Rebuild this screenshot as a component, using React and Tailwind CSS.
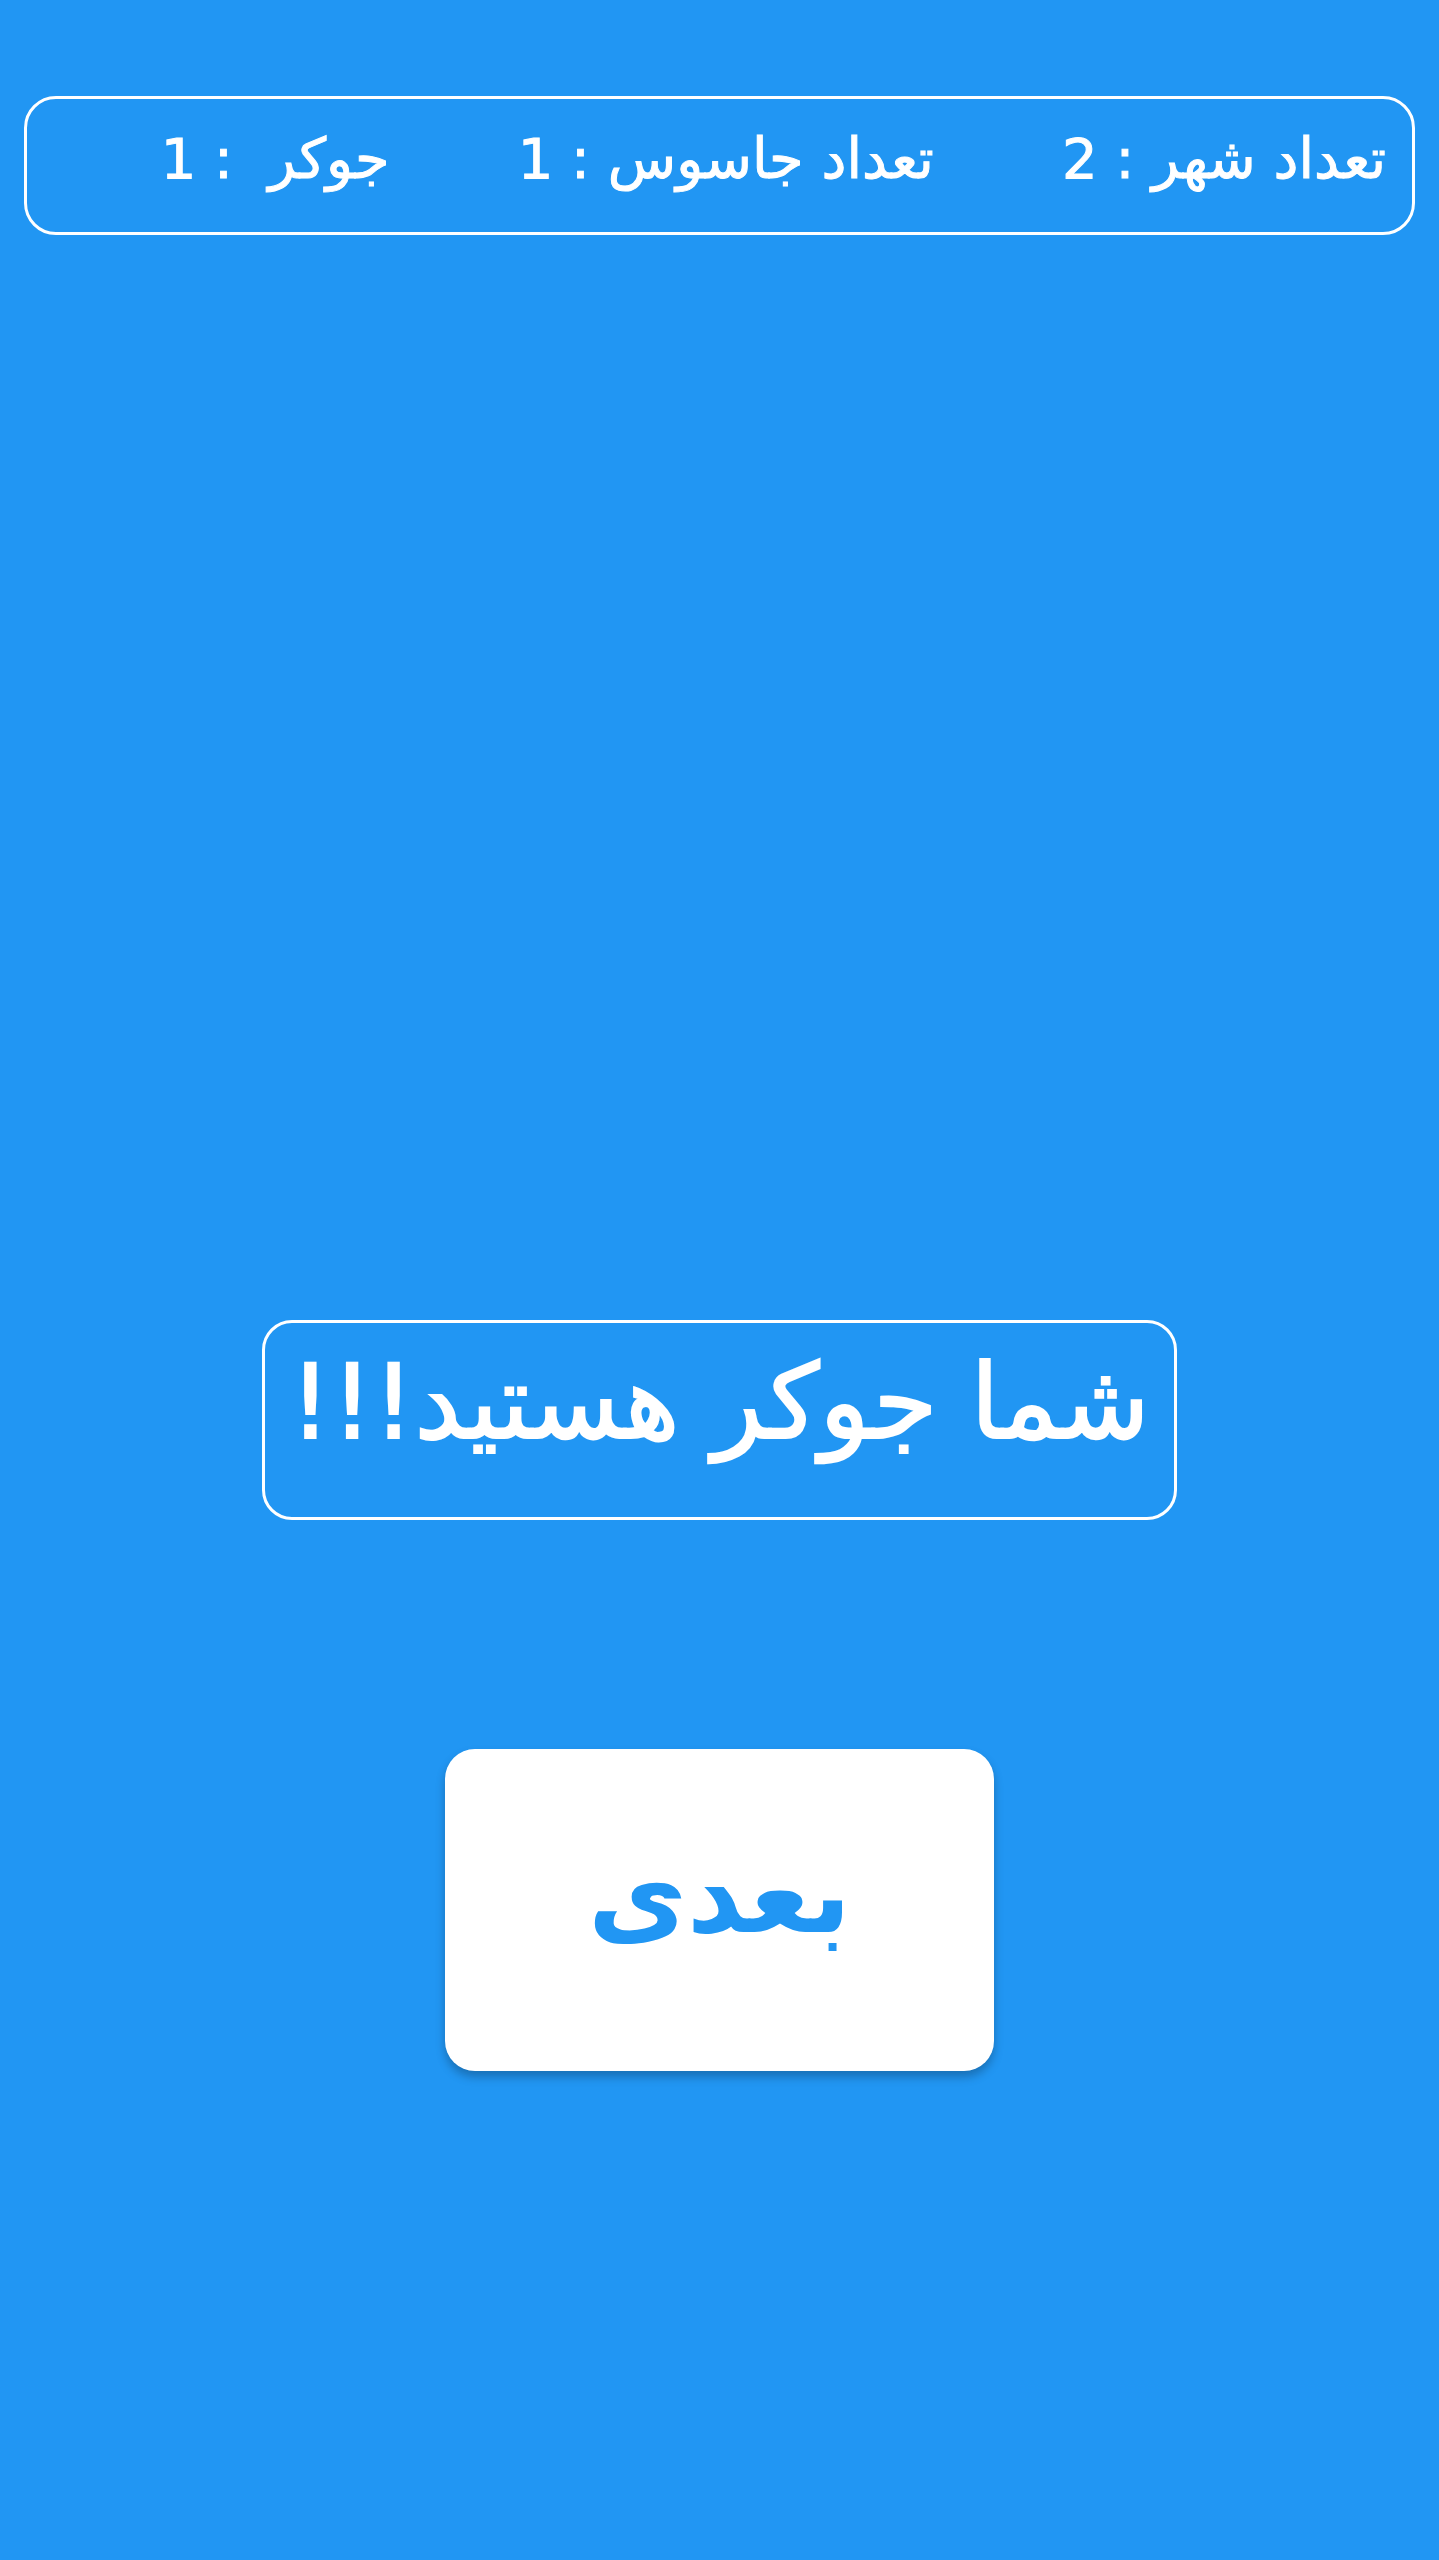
export default function App() {
  const counts = [
    { label: "تعداد شهر", value: 2 },
    { label: "تعداد جاسوس", value: 1 },
    { label: "جوکر ", value: 1 },
  ];

  return (
    <div
      dir="rtl"
      className="min-h-[2560px] w-full bg-[#2196F3] pt-[96px] flex flex-col items-center"
      style={{ fontFamily: '"DejaVu Sans", "Noto Sans", sans-serif' }}
    >
      {/* counts bar */}
      <div className="w-[1391px] h-[139px] border-[3px] border-white rounded-[32px] flex items-center pr-[26px] pb-[14px] gap-[128px] text-white text-[56px] leading-none [-webkit-text-stroke:1px_white]">
        {counts.map((c) => (
          <span key={c.label} className="whitespace-pre">
            {c.label} : {c.value}
          </span>
        ))}
      </div>

      {/* role */}
      <div className="mt-[1085px] w-[915px] h-[200px] border-[3px] border-white rounded-[30px] flex items-center justify-center pb-[36px]">
        <span className="text-white text-[104px] leading-none [-webkit-text-stroke:2px_white]">شما جوکر هستید!!!</span>
      </div>

      {/* next */}
      <button className="mt-[229px] w-[549px] h-[322px] bg-white rounded-[30px] shadow-[0_6px_10px_rgba(0,0,0,0.25)] flex items-center justify-center">
        <span className="text-[#2196F3] text-[108px] font-bold leading-none pb-[30px]">بعدی</span>
      </button>
    </div>
  );
}
